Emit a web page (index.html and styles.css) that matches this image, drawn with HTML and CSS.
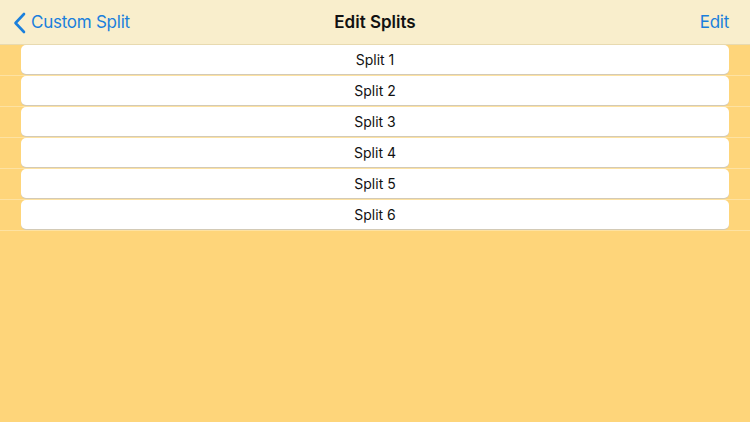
FILE: index.html
```html
<!DOCTYPE html>
<html>
<head>
<meta charset="utf-8">
<link rel="stylesheet" href="styles.css">
</head>
<body>
<header class="nav">
  <div class="nav-left">
    <svg class="chev" width="13" height="22" viewBox="0 0 13 22"><path d="M11 2 L2.5 11 L11 20" fill="none" stroke="#1a7fdc" stroke-width="2.6" stroke-linecap="round" stroke-linejoin="round"/></svg>
    <span class="link">Custom Split</span>
  </div>
  <div class="nav-title">Edit Splits</div>
  <div class="nav-right"><span class="link">Edit</span></div>
</header>
<main class="list">
  <div class="row"><div class="card">Split 1</div></div>
  <div class="row"><div class="card">Split 2</div></div>
  <div class="row"><div class="card">Split 3</div></div>
  <div class="row"><div class="card">Split 4</div></div>
  <div class="row"><div class="card">Split 5</div></div>
  <div class="row"><div class="card">Split 6</div></div>
</main>
</body>
</html>
```
FILE: styles.css
```css
html, body {
  margin: 0;
  padding: 0;
  height: 100%;
}
body {
  background: #fed57a;
  font-family: Inter, "Noto Sans", sans-serif;
  color: #111;
}
.nav {
  background: #f9eecc;
  border-bottom: 1px solid #e8dab0;
  display: grid;
  grid-template-columns: 1fr auto 1fr;
  align-items: center;
  box-sizing: border-box;
  height: 45px;
}
.nav-left {
  display: flex;
  align-items: center;
  gap: 5px;
  padding-left: 13px;
}
.chev { display: block; margin-top: 1px; }
.link {
  color: #1a7fdc;
  font-size: 17px;
  letter-spacing: -0.25px;
}
.nav-title {
  font-size: 17px;
  font-weight: 600;
  color: #111;
}
.nav-right {
  display: flex;
  justify-content: flex-end;
  padding-right: 21px;
}
.list {
  display: flex;
  flex-direction: column;
}
.row {
  height: 31px;
  border-bottom: 1px solid #fde2a2;
  box-sizing: border-box;
  padding: 0 21px;
}
.card {
  height: 29px;
  background: #fff;
  border-radius: 5px;
  box-shadow: 0 1px 0 #d3cab6;
  display: flex;
  align-items: center;
  justify-content: center;
  font-size: 14px;
  color: #111;
}
```
